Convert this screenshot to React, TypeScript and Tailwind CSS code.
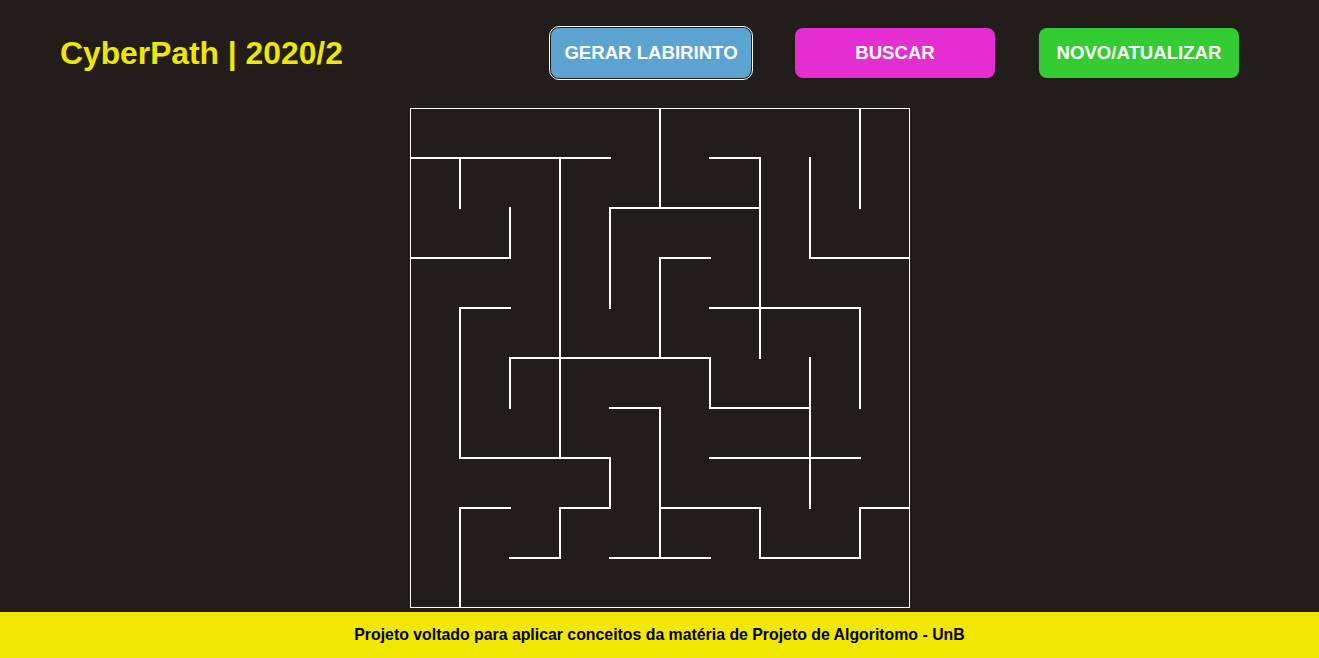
const walls: [number, number, number, number][] = [
  [0, 50, 200, 50],
  [50, 50, 50, 100],
  [150, 50, 150, 350],
  [250, 0, 250, 100],
  [300, 50, 350, 50],
  [350, 50, 350, 250],
  [200, 100, 350, 100],
  [200, 100, 200, 200],
  [400, 50, 400, 150],
  [400, 150, 500, 150],
  [450, 0, 450, 100],
  [100, 100, 100, 150],
  [0, 150, 100, 150],
  [250, 150, 300, 150],
  [250, 150, 250, 250],
  [50, 200, 100, 200],
  [50, 200, 50, 350],
  [300, 200, 450, 200],
  [450, 200, 450, 300],
  [100, 250, 300, 250],
  [100, 250, 100, 300],
  [300, 250, 300, 300],
  [300, 300, 400, 300],
  [400, 250, 400, 400],
  [200, 300, 250, 300],
  [250, 300, 250, 450],
  [50, 350, 200, 350],
  [200, 350, 200, 400],
  [150, 400, 200, 400],
  [150, 400, 150, 450],
  [100, 450, 150, 450],
  [300, 350, 450, 350],
  [50, 400, 100, 400],
  [50, 400, 50, 500],
  [250, 400, 350, 400],
  [350, 400, 350, 450],
  [350, 450, 450, 450],
  [450, 400, 450, 450],
  [450, 400, 500, 400],
  [200, 450, 300, 450],
]

function Maze() {
  return (
    <svg width="500" height="500" viewBox="0 0 500 500" className="block">
      <rect x="0.5" y="0.5" width="499" height="499" fill="none" stroke="#ffffff" strokeWidth="1" />
      {walls.map(([x1, y1, x2, y2], i) => (
        <line key={i} x1={x1} y1={y1} x2={x2} y2={y2} stroke="#ffffff" strokeWidth="2" strokeLinecap="square" />
      ))}
    </svg>
  )
}

export default function App() {
  return (
    <div className="h-[658px] w-full bg-[#221c1a] flex flex-col font-['Liberation_Sans',Arial,sans-serif]">
      <header className="flex items-center justify-between pl-[60px] pr-[80px] pt-[28px] pb-[30px]">
        <h1 className="text-[31.8px] font-bold text-[#f0e600] leading-[50px]">CyberPath | 2020/2</h1>
        <div className="flex gap-[44px]">
          <button className="w-[200px] h-[50px] rounded-lg bg-[#5ba3d0] text-white text-[18.6px] font-bold outline outline-1 outline-offset-1 outline-white">
            GERAR LABIRINTO
          </button>
          <button className="w-[200px] h-[50px] rounded-lg bg-[#e42ed2] text-white text-[18.6px] font-bold">
            BUSCAR
          </button>
          <button className="w-[200px] h-[50px] rounded-lg bg-[#33cc33] text-white text-[18.6px] font-bold">
            NOVO/ATUALIZAR
          </button>
        </div>
      </header>
      <main className="flex justify-center">
        <Maze />
      </main>
      <footer className="mt-auto h-[46px] bg-[#f0e800] flex items-center justify-center">
        <p className="text-[15.85px] font-bold text-black">
          Projeto voltado para aplicar conceitos da matéria de Projeto de Algoritomo - UnB
        </p>
      </footer>
    </div>
  )
}
